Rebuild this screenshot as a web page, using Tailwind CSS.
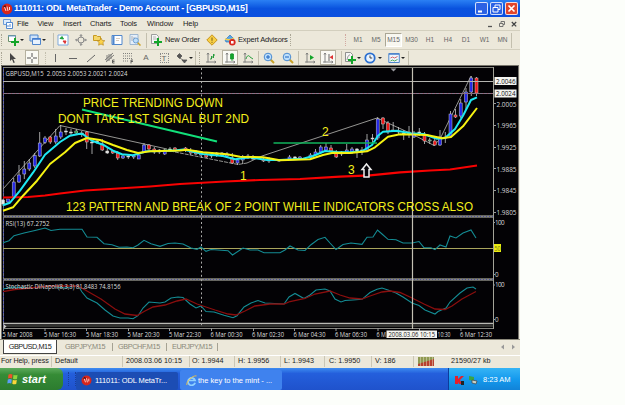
<!doctype html>
<html lang="en">
<head>
	<meta charset="UTF-8">
	<meta name="viewport" content="width=device-width, initial-scale=1.0">
	<title>ODL MetaTrader</title>
	<script src="https://cdn.jsdelivr.net/npm/@tailwindcss/browser@4"></script>
</head>
<body class="h-[405px] overflow-hidden bg-[#fcfefa] font-['Liberation_Sans',sans-serif]">

<!-- icons shared by several bars -->
<svg class="hidden">
	<symbol id="ball" viewBox="0 0 12 12">
		<circle cx="6" cy="6" r="5.4" fill="#d8261c"/>
		<path d="M2 4l2-2 1.500 1.500L4 5z" fill="#5c0c10"/>
		<path d="M3.500 4l1.500 4M6 3.500l1 4.500M8.500 4v3" stroke="#ffe9e4" stroke-width=".9"/>
	</symbol>
	<symbol id="plus" viewBox="0 0 8 8">
		<path d="M3 0h2v3h3v2H5v3H3V5H0V3h3z" fill="#14a52a"/>
	</symbol>
	<symbol id="axes" viewBox="0 0 12 12">
		<path d="M3 1v9.500M1 10h10M2 2.500l1-1.500 1 1.500M9.500 9l1.500 1-1.500 1" fill="none" stroke="#777" stroke-width=".9"/>
	</symbol>
	<symbol id="lens" viewBox="0 0 12 12">
		<path d="M7.500 7.500l3.500 3.500" stroke="#c9a227" stroke-width="2"/>
		<circle cx="5" cy="5" r="3.800" fill="#bfe0fb" stroke="#4a8ad0"/>
	</symbol>
</svg>

<div class="flex h-[390px] w-[520px] flex-col overflow-hidden bg-[#ece8da] text-[#222]">

	<!-- title bar -->
	<div class="flex h-[17px] items-center bg-linear-to-b from-[#2b80f4] via-[#0a52de] to-[#0b4fe0] pr-0.5 pl-px text-white">
		<svg class="h-3 w-3"><use href="#ball"/></svg>
		<span class="mt-px ml-px w-[240px] text-[9px] font-bold tracking-[-0.26px] whitespace-nowrap">111011: ODL MetaTrader - Demo Account - [GBPUSD,M15]</span>
		<div class="ml-auto flex gap-0.5">
			<svg class="size-[13px] rounded-xs border border-white/80 bg-[#2c62e4]" viewBox="0 0 11 11"><path d="M2 8.500h4" stroke="#fff" stroke-width="2"/></svg>
			<svg class="size-[13px] rounded-xs border border-white/80 bg-[#2c62e4]" viewBox="0 0 11 11"><path d="M4 4V2h5v4.500H7M2 4.500h5v4.500H2z" fill="none" stroke="#fff"/></svg>
			<svg class="size-[13px] rounded-xs border border-white/80 bg-[#e0452c]" viewBox="0 0 11 11"><path d="M2.500 2.500l6 6M8.500 2.500l-6 6" stroke="#fff" stroke-width="1.600"/></svg>
		</div>
	</div>

	<!-- menu -->
	<div class="flex h-[13px] items-center pl-[3px] text-[7.5px] tracking-[-0.1px]">
		<svg class="h-[10px] w-[10px]" viewBox="0 0 10 10"><path d="M.5.500h7v5h-7z" fill="#dcebfb" stroke="#6b9bd8"/><path d="M3.500 3.500h6v6h-6z" fill="#fff" stroke="#5288cf"/><path d="M5 8V6M7 8V5" stroke="#5288cf"/></svg>
		<span class="ml-1 w-[20.5px]">File</span>
		<span class="w-[25.5px]">View</span>
		<span class="w-[27px]">Insert</span>
		<span class="w-[30px]">Charts</span>
		<span class="w-[27px]">Tools</span>
		<span class="w-[36px]">Window</span>
		<span>Help</span>
		<div class="mr-[3px] ml-auto flex gap-[6px]">
			<svg class="h-2 w-1.5" viewBox="0 0 6 8"><path d="M1 6.500h4" stroke="#555" stroke-width="1.300"/></svg>
			<svg class="h-2 w-1.5" viewBox="0 0 6 8"><path d="M2 3V1.500h3.500v3H4M.5 3.500h3.500v3H.5z" fill="none" stroke="#666" stroke-width=".9"/></svg>
			<svg class="h-2 w-1.5" viewBox="0 0 6 8"><path d="M.8 2l4.400 4.400M5.200 2L.8 6.400" stroke="#444" stroke-width="1.300"/></svg>
		</div>
	</div>

	<!-- standard toolbar -->
	<div class="flex h-[19px] items-center border-t border-[#d3cfbe] text-[7.5px]">
		<div class="ml-px h-3 w-[3px] border-l border-dotted border-[#aaa695]"></div>
		<div class="flex w-[22px] items-center justify-center gap-px">
			<svg class="h-3 w-3" viewBox="0 0 12 12"><path d="M1.500 1.500h7v6h-7z" fill="#fff" stroke="#6a8f6a"/><path d="M1 2h8" stroke="#6b9bd8"/><use href="#plus" x="4" y="4" width="8" height="8"/></svg>
			<svg class="w-1 h-1" viewBox="0 0 4 4"><path d="M0 1h4L2 3z" fill="#222"/></svg>
		</div>
		<div class="flex w-[23px] items-center justify-center gap-px">
			<svg class="h-3 w-3" viewBox="0 0 12 12"><path d="M1 1h8v6H1z" fill="#cfe3fa" stroke="#4f86cc"/><path d="M3.500 4.500h8v6h-8z" fill="#e8f2fd" stroke="#4f86cc"/><path d="M3.500 5h8" stroke="#3f7ad0" stroke-width="1.500"/></svg>
			<svg class="w-1 h-1" viewBox="0 0 4 4"><path d="M0 1h4L2 3z" fill="#222"/></svg>
		</div>
		<div class="h-[15px] w-[5px] border-r border-[#c3bfae]"></div>
		<div class="flex w-[17px] justify-center"><svg class="h-3 w-3" viewBox="0 0 12 12"><path d="M1 1h10v10H1z" fill="#fff" stroke="#7fa9dc"/><path d="M3 4.500l2-2 1.500 2.500z" fill="#19a23a" stroke="#19a23a"/><path d="M6 7l3 0-1 2.500z" fill="#d33" stroke="#d33"/></svg></div>
		<div class="flex w-[19px] justify-center"><svg class="h-3 w-3" viewBox="0 0 12 12" fill="none" stroke="#888"><circle cx="6" cy="6" r="3"/><path d="M6 .5v3M6 8.500v3M.5 6h3M8.500 6h3M4.700 2L6 .7 7.300 2M4.700 10L6 11.300 7.300 10M2 4.700L.7 6 2 7.300M10 4.700L11.300 6 10 7.300"/></svg></div>
		<div class="flex w-[18px] justify-center"><svg class="h-3 w-3" viewBox="0 0 12 12"><path d="M.5 1.500h3l1 1h3v4h-7z" fill="#f5d76a" stroke="#c79a20"/><path d="M8 4l1.200 2.400 2.600.3-1.900 1.800.5 2.700L8 10l-2.400 1.200.5-2.700-1.900-1.800 2.600-.3z" fill="#fbd34c" stroke="#b9891c" stroke-width=".7"/></svg></div>
		<div class="flex w-[18px] justify-center"><svg class="h-3 w-3" viewBox="0 0 12 12"><path d="M1 1.500h10v9H1z" fill="#fff" stroke="#4f86cc"/><path d="M2.500 2v8" stroke="#4f86cc" stroke-width="2"/><path d="M5 4.500h4M5 6.500h3" stroke="#c9b7a5" stroke-width=".7"/></svg></div>
		<div class="flex w-[18px] justify-center"><svg class="h-3 w-3" viewBox="0 0 12 12"><path d="M1 .5h8v10H1z" fill="#e5effa" stroke="#8ba9ca" stroke-width=".8"/><path d="M3 2v5M5 3v3" stroke="#999" stroke-width=".7"/><path d="M8.500 8.500l3 3" stroke="#c9a227" stroke-width="1.500"/><circle cx="6.800" cy="6.500" r="2.500" fill="#bfe0fb" stroke="#5a8fc8" stroke-width=".8"/></svg></div>
		<div class="h-[15px] w-[3px] border-r border-[#c3bfae]"></div>
		<div class="flex w-[18px] justify-center"><svg class="h-3 w-3" viewBox="0 0 12 12"><path d="M1.500.500h5l2 2v7h-7z" fill="#f6f6f6" stroke="#888" stroke-width=".8"/><path d="M3 3h3M3 5h4" stroke="#999" stroke-width=".7"/><use href="#plus" x="4" y="4" width="8" height="8"/></svg></div>
		<span class="w-[38px] tracking-[-0.17px] whitespace-nowrap">New Order</span>
		<div class="flex w-[18px] justify-center"><svg class="h-3 w-3" viewBox="0 0 12 12"><path d="M6 .8L11.200 6 6 11.200.8 6z" fill="#f7cf45" stroke="#c9941c"/><path d="M6 3.500v3.300M6 7.800v1" stroke="#7a5a10"/></svg></div>
		<div class="flex w-[17px] justify-center"><svg class="h-3 w-3" viewBox="0 0 12 12"><path d="M1 6l5-5 4 4-2 3H2z" fill="#5aa6e6" stroke="#2f77bd" stroke-width=".7"/><path d="M1 5c3 1 6 1 9-1" stroke="#f1cf4d" stroke-width="1.500" fill="none"/><circle cx="8.300" cy="8.300" r="3.300" fill="#d92a20"/><path d="M7 7h2.600v2.600H7z" fill="#fff"/></svg></div>
		<span class="w-[53px] border-r border-dotted border-[#aaa695] tracking-[-0.17px] whitespace-nowrap">Expert Advisors</span>
		<div class="h-3 w-[55px] border-r border-dotted border-[#d2a8a0]"></div>
		<div class="flex h-[15px] items-center border-r border-[#c3bfae] pl-[3px] text-[6.5px] text-[#666]">
			<span class="w-[18px] text-center">M1</span>
			<span class="w-[18px] text-center">M5</span>
			<span class="h-[14px] w-[17px] border border-[#aaa695] border-r-white border-b-white bg-[#f8f7f0] text-center leading-[12px]">M15</span>
			<span class="w-[19px] text-center">M30</span>
			<span class="w-[18px] text-center">H1</span>
			<span class="w-[18px] text-center">H4</span>
			<span class="w-[18px] text-center">D1</span>
			<span class="w-[19px] text-center">W1</span>
			<span class="w-[17px] text-center">MN</span>
		</div>
	</div>

	<!-- drawing and chart toolbar -->
	<div class="flex h-4 items-center border-t border-[#d3cfbe] text-[8px] text-[#666]">
		<div class="ml-px h-3 w-[3px] border-l border-dotted border-[#aaa695]"></div>
		<div class="flex w-[21px] justify-center"><svg class="mr-1.5 h-3 w-3" viewBox="0 0 12 12"><path d="M4 1v8l2-1.800L7.500 11l1.300-.6L7.300 7H10z" fill="#444"/></svg></div>
		<div class="flex h-[15px] w-[14px] items-center justify-center border border-[#b5b19f] bg-[#fafaf4]"><svg class="h-3 w-3" viewBox="0 0 12 12"><path d="M6 1v4M6 7v4M1 6h4M7 6h4" stroke="#555"/></svg></div>
		<div class="h-3 w-[7px] border-r border-dotted border-[#c3bfae]"></div>
		<div class="flex w-[18px] justify-center"><svg class="h-3 w-3" viewBox="0 0 12 12"><path d="M6.500 2v8" stroke="#666"/></svg></div>
		<div class="flex w-[18px] justify-center"><svg class="h-3 w-3" viewBox="0 0 12 12"><path d="M2 6.500h8" stroke="#666"/></svg></div>
		<div class="flex w-[18px] justify-center"><svg class="h-3 w-3" viewBox="0 0 12 12"><path d="M2 10l8-7" stroke="#666"/></svg></div>
		<div class="flex w-[19px] justify-center"><svg class="h-3 w-3" viewBox="0 0 12 12"><path d="M1 8l8-7M2 10l8-7M3 3v6M5 2v7M7 2v5" stroke="#666" stroke-width=".8"/><path d="M10.500 8H8.500v3h2M8.500 9.500h2" stroke="#444" stroke-width=".8" fill="none"/></svg></div>
		<div class="flex w-[18px] justify-center"><svg class="h-3 w-3" viewBox="0 0 12 12"><path d="M1 1.500h10M1 4h10M1 6.500h10M1 9h6" stroke="#666" stroke-width=".8" stroke-dasharray="1 1"/><path d="M11 8H9v3.500M9 9.500h2" stroke="#444" stroke-width=".8" fill="none"/></svg></div>
		<span class="w-[18px] text-center">A</span>
		<div class="flex w-[18px] justify-center"><span class="h-[10px] w-[9px] border border-dotted border-[#888] text-center text-[8px] leading-[9px]">T</span></div>
		<div class="flex w-[22px] items-center justify-center gap-px">
			<svg class="h-3 w-3" viewBox="0 0 12 12"><path d="M1 4l2.500-2.500L6 4 3.500 6.500zM6 8h5l-2.500 3zM4 6l4 3" fill="#555" stroke="#555" stroke-width=".8"/></svg>
			<svg class="w-1 h-1" viewBox="0 0 4 4"><path d="M0 1h4L2 3z" fill="#222"/></svg>
		</div>
		<div class="h-[14px] w-px border-r border-[#c3bfae]"></div>
		<div class="h-3 w-1 border-r border-dotted border-[#aaa695]"></div>
		<div class="flex w-[22px] justify-center"><svg class="h-3 w-3" viewBox="0 0 12 12"><use href="#axes"/><path d="M5 7h1.500V4M8.500 2v4M8.500 3h1.500M8.500 5H7" stroke="#14942c" stroke-width=".9" fill="none"/></svg></div>
		<div class="flex h-[15px] w-4 items-center justify-center border border-[#b5b19f] bg-[#fafaf4]"><svg class="h-3 w-3" viewBox="0 0 12 12"><use href="#axes"/><path d="M6.500 2h3v5h-3zM8 1v8" fill="#14b02c" stroke="#14942c" stroke-width=".8"/></svg></div>
		<div class="flex w-[20px] justify-center"><svg class="h-3 w-3" viewBox="0 0 12 12"><use href="#axes"/><path d="M4 7c1-4 3-4 4-2l3 2" fill="none" stroke="#14942c" stroke-width=".9"/></svg></div>
		<div class="h-[14px] w-px bg-[#c3bfae]"></div>
		<div class="flex w-[20px] justify-center"><svg class="h-3 w-3" viewBox="0 0 12 12"><use href="#lens"/><path d="M3 5h4M5 3v4" stroke="#1c62c0"/></svg></div>
		<div class="flex w-[17px] justify-center"><svg class="h-3 w-3" viewBox="0 0 12 12"><use href="#lens"/><path d="M3 5h4" stroke="#1c62c0"/></svg></div>
		<div class="ml-0.5 h-[14px] w-px bg-[#c3bfae]"></div>
		<div class="flex w-[21px] justify-center"><svg class="h-3 w-3" viewBox="0 0 12 12"><use href="#axes"/><path d="M6 3l4 2.500L6 8z" fill="#14a52a"/></svg></div>
		<div class="flex h-[15px] w-4 items-center justify-center border border-[#b5b19f] bg-[#fafaf4]"><svg class="h-3 w-3" viewBox="0 0 12 12"><use href="#axes"/><path d="M7 2v7" stroke="#666"/><path d="M11 3L7.500 5.200 11 7.500z" fill="#d33"/></svg></div>
		<div class="ml-[5px] h-[14px] w-px bg-[#c3bfae]"></div>
		<div class="flex w-[20px] items-center justify-center gap-px">
			<svg class="h-3 w-3" viewBox="0 0 12 12"><path d="M1.500.500h5l2 2v7h-7z" fill="#f6f6f6" stroke="#777" stroke-width=".8"/><path d="M3 8c1-5 2-5 3-5" stroke="#777" fill="none" stroke-width=".8"/><use href="#plus" x="4" y="4" width="8" height="8"/></svg>
			<svg class="w-1 h-1" viewBox="0 0 4 4"><path d="M0 1h4L2 3z" fill="#222"/></svg>
		</div>
		<div class="flex w-[22px] items-center justify-center gap-0.5">
			<svg class="h-3 w-3" viewBox="0 0 12 12"><circle cx="6" cy="6" r="4.700" fill="#eaf4ff" stroke="#2a6fd0" stroke-width="1.800"/><path d="M6 3.500V6h2.200" fill="none" stroke="#333" stroke-width=".9"/></svg>
			<svg class="w-1 h-1" viewBox="0 0 4 4"><path d="M0 1h4L2 3z" fill="#222"/></svg>
		</div>
		<div class="flex w-[24px] items-center justify-center gap-px">
			<svg class="h-3 w-3" viewBox="0 0 12 12"><path d="M.8 1.500h10.500v9H.8z" fill="#eef5fd" stroke="#4f86cc"/><path d="M1 2h10" stroke="#4f86cc" stroke-width="1.600"/><path d="M2.500 6l2-1 2 1 3-1.500" stroke="#c44" fill="none" stroke-width=".8"/><path d="M2.500 9l2-1 2 1 3-1.500" stroke="#2a9a3a" fill="none" stroke-width=".8"/></svg>
			<svg class="w-1 h-1" viewBox="0 0 4 4"><path d="M0 1h4L2 3z" fill="#222"/></svg>
		</div>
		<div class="h-[14px] w-px bg-[#c3bfae]"></div>
	</div>

	<!-- chart window, user units are window pixels -->
	<svg class="h-[274px] w-[520px] shrink-0 font-['Open_Sans',sans-serif]" viewBox="0 65 520 274">
		<rect x="0" y="65" width="520" height="274" fill="#ece8da"/>
		<rect x="1" y="65" width="517.500" height="274" fill="#030205"/>
		<path d="M1.500 339V65.500H518" fill="none" stroke="#77746a"/>

		<!-- pane borders -->
		<g fill="none">
			<path d="M3 67.500H493" stroke="#83837c"/>
			<path d="M3.500 68V328" stroke="#6f7090"/>
			<path d="M3.500 68V328" stroke="#3b45b8" stroke-dasharray="1 3"/>
			<path d="M3 216.500H493M3 279.500H493" stroke="#87877f" stroke-width="2.600"/>
			<path d="M3 216.500H493M3 279.500H493" stroke="#4b50a0" stroke-dasharray="1 2"/>
			<path d="M3 323.500H493" stroke="#b9b9b4" stroke-width="1.400"/>
			<path d="M3 326H493" stroke="#45453f" stroke-width="1.500"/>
			<path d="M3 328.500H493" stroke="#85857f"/>
			<path d="M493.500 67V329" stroke="#a3a398"/>
			<path d="M201.500 68V327" stroke="#aaaaa8" stroke-dasharray="2 2.400"/>
		</g>
		<path d="M390.500 68.500h6l-3 3z" fill="#9a9aa0"/>
		<path d="M3.500 324v5l3-2.500z" fill="#ccc"/>
		<path d="M3.500 328v3M45 328v3M86.500 328v3M128.500 328v3M169.500 328v3M211.500 328v3M253.500 328v3M294.500 328v3M336 328v3M378 328v3M419.500 328v3M461 328v3" stroke="#999"/>
		<path d="M493 103.500h3M493 125.500h3M493 147.500h3M493 168.500h3M493 190.500h3M493 212.500h3M493 222.500h2M493 274.500h2M493 285h2M493 319.500h2" stroke="#999"/>

		<!-- zigzag -->
		<path d="M3 189L60 125.500 167 149" fill="none" stroke="#a5a5a2" stroke-width=".9"/>
		<path d="M170 151L238 164.500 247 163" fill="none" stroke="#a5a5a2" stroke-width=".9" stroke-dasharray="4 1"/>
		<path d="M247 163L262 156 377 118 412 134 434 145.500 440 139 471 76" fill="none" stroke="#a5a5a2" stroke-width=".9"/>

		<g id="candles" stroke="#c9c9c9" stroke-width=".8"></g>

		<!-- moving averages -->
		<g fill="none" stroke-width="2" stroke-linejoin="round">
			<polyline stroke="#f80202" stroke-width="2.200" points="3,197.500 28,197 45,195.500 60,193.500 85,190.500 110,189 150,186.500 180,184 225,181.500 260,180 300,179 340,176.700 370,175.300 400,172.300 430,170.500 450,169.500 477,165.500"/>
			<polyline stroke="#1ee8f2" points="3,205.300 10,202.700 20,190.700 33,172.700 45,154.700 60,142 70,135.700 80,133.700 83,134.300 92,140.700 103,144.700 113,150.700 122,154.300 133,155.300 147,151.300 163,151 177,150.300 183,149.500 203,154 223,156 235,159.300 250,157.300 267,160 280,160 303,158.700 313,156 325,151 337,152 350,152.300 362,151.300 372,145 378,135.700 383,131.700 397,130.700 410,133.300 423,134 437,138.700 445,138 455,129 463,115.700 471,100 477,97.300"/>
			<polyline stroke="#f6f312" points="3,210.700 13,207.300 23,195.700 37,180.700 50,164 65,152.300 75,143 87,138 100,140 113,145 127,150 138,153 150,151.300 180,150.500 187,149.700 203,152.300 227,154.300 240,156.700 263,157.300 280,160.300 310,159.300 323,155 333,152.700 350,153 367,151.300 375,147.300 388,136.700 400,134.300 427,135 442,138.300 451,137 463,126.300 477,108"/>
		</g>
		<path d="M82 109.500L217 141.500" stroke="#12e07a" stroke-width="2"/>
		<path d="M273.500 143H377" stroke="#12b45c" stroke-width="1.600"/>

		<!-- price lines and cursor -->
		<path d="M3 81.500H493" stroke="#b4b4b0"/>
		<path d="M3 93.500H493" stroke="#82788a"/>
		<path d="M3 93.500H493" stroke="#a05a70" stroke-dasharray="1 3"/>

		<!-- RSI and stochastic -->
		<path d="M3 248.500H493" stroke="#a9a45c"/>
		<g fill="none" stroke-width="1.100">
			<polyline stroke="#148c94" points="3,242.700 9,240.700 14,235.700 24,233 35,230.500 45,228 51,230.500 60,229.300 82,229.300 87,237 97,237.300 104,243.700 112,244.700 119,247.300 127,247 133,247.700 138,245 144,240.300 151,243.700 160,246.300 168,243.500 175,243 183,244 191,248 197,249.300 201,247 206,251.300 211,249.500 228,250.700 232.500,255 243,248 250,250 258,250 264,252.700 280,252.700 285,250 290,246 298,250 305,250.500 311,244.700 318,239.500 325,237.300 330,243 336,249.500 343,244.500 351,243 362,244.300 367,237.300 373,237 377.500,230 382,234 388,239.300 396,239.700 403,243 412,243 419,241.500 424,247.700 431,247.700 435,249.700 440,245 446,247 450,236 456,238 463,233 471,230 476,238"/>
			<polyline stroke="#148c94" points="3,289 12,287 30,288 50,286 65,288 78,285.500 82,292 87,298 97,303 105,310 113,316 120,318 128,318 133,318.700 138,315.700 143,308 149,302 160,303 165,302 171,298 178,297 183,297.500 190,304 196,308 201,306 206,311.500 214,312 224,315.300 233,317.700 237,315.700 244,307 251,303 258,300.500 265,303 284,304 289,297 295,293.500 304,298.500 310,295 316,290 325,289 330,291 335,299 341,302 345,300.500 353,300 362,299.300 370,292.500 377,289.300 382,288 388,290 396,293 403,297 412,303 419,305.500 425,310 435,314 438,311.500 446,308 450,302 460,293 467,288 473,287 476,289"/>
			<polyline stroke="#8a0e0e" stroke-width="1.300" points="3,291.700 15,289.500 30,288 50,286 78,286 87,291 101,299 115,309 125,314 137,315.500 145,311 153,307 165,305 177,301 186,299 197,304 215,310 228,314 236,315 245,311 255,306 270,304 284,304 290,301.500 305,298.500 315,294 330,291 340,295 350,298 362,299 370,296 382,292 390,291 400,292.500 412,298 424,304 435,309 445,309.500 452,306 462,299 476,291.500"/>
		</g>
		<path d="M412.500 68V329" stroke="#c4c1b4" stroke-width="1.200"/>

		<!-- notes drawn on the chart -->
		<g fill="#f4f01c" font-size="12" font-family="Liberation Sans, sans-serif">
			<text x="83" y="106.500" textLength="140" lengthAdjust="spacingAndGlyphs">PRICE TRENDING DOWN</text>
			<text x="58" y="122.500" textLength="191" lengthAdjust="spacingAndGlyphs">DONT TAKE 1ST SIGNAL BUT 2ND</text>
			<text x="66" y="211" textLength="407" lengthAdjust="spacingAndGlyphs">123 PATTERN AND BREAK OF 2 POINT WHILE INDICATORS CROSS ALSO</text>
			<text x="240" y="180">1</text>
			<text x="322" y="136">2</text>
			<text x="348" y="174">3</text>
		</g>
		<path d="M366.500 164l4.500 5.500h-2v7.500h-5v-7.500h-2z" fill="#050308" stroke="#eee" stroke-width="1.500"/>

		<!-- captions and axis labels -->
		<g fill="#dedede" font-size="6.500">
			<text x="5.500" y="75.500" textLength="122" lengthAdjust="spacingAndGlyphs" xml:space="preserve">GBPUSD,M15  2.0053 2.0053 2.0021 2.0024</text>
			<text x="5.500" y="226" textLength="44" lengthAdjust="spacingAndGlyphs">RSI(13) 67.2752</text>
			<text x="5.500" y="289" textLength="115" lengthAdjust="spacingAndGlyphs">Stochastic DiNapoli(8,3,3) 81.8483 74.8156</text>
		</g>
		<g fill="#d8d8d8" font-size="6.300">
			<text x="496.500" y="106.500" textLength="20" lengthAdjust="spacingAndGlyphs">2.0005</text>
			<text x="496.500" y="128" textLength="20" lengthAdjust="spacingAndGlyphs">1.9965</text>
			<text x="496.500" y="149.500" textLength="20" lengthAdjust="spacingAndGlyphs">1.9925</text>
			<text x="496.500" y="171.500" textLength="20" lengthAdjust="spacingAndGlyphs">1.9885</text>
			<text x="496.500" y="193" textLength="20" lengthAdjust="spacingAndGlyphs">1.9845</text>
			<text x="496.500" y="214.500" textLength="20" lengthAdjust="spacingAndGlyphs">1.9805</text>
			<text x="495" y="224.500" textLength="9.500">100</text>
			<text x="495" y="276.500">0</text>
			<text x="495" y="287" textLength="9.500">100</text>
			<text x="495" y="321.500">0</text>
		</g>
		<rect x="494.500" y="77" width="22" height="8" fill="#f4f4f0"/>
		<rect x="494.500" y="89.500" width="22" height="8" fill="#f4f4f0"/>
		<rect x="494" y="244" width="7" height="8" fill="#ecec10"/>
		<g fill="#111" font-size="6.300">
			<text x="496" y="83.500" textLength="19.500" lengthAdjust="spacingAndGlyphs">2.0046</text>
			<text x="496" y="96" textLength="19.500" lengthAdjust="spacingAndGlyphs">2.0024</text>
			<text x="494.500" y="250.500" textLength="6" lengthAdjust="spacingAndGlyphs" fill="#77771c">50</text>
		</g>
		<g fill="#dedede" font-size="6.300">
			<text x="2.500" y="336.500" textLength="30" lengthAdjust="spacingAndGlyphs">5 Mar 2008</text>
			<text x="44" y="336.500" textLength="32" lengthAdjust="spacingAndGlyphs">5 Mar 16:30</text>
			<text x="86" y="336.500" textLength="32" lengthAdjust="spacingAndGlyphs">5 Mar 18:30</text>
			<text x="127.500" y="336.500" textLength="32" lengthAdjust="spacingAndGlyphs">5 Mar 20:30</text>
			<text x="169" y="336.500" textLength="32" lengthAdjust="spacingAndGlyphs">5 Mar 22:30</text>
			<text x="210.500" y="336.500" textLength="32" lengthAdjust="spacingAndGlyphs">6 Mar 00:30</text>
			<text x="252" y="336.500" textLength="32" lengthAdjust="spacingAndGlyphs">6 Mar 02:30</text>
			<text x="293.500" y="336.500" textLength="32" lengthAdjust="spacingAndGlyphs">6 Mar 04:30</text>
			<text x="335" y="336.500" textLength="32" lengthAdjust="spacingAndGlyphs">6 Mar 06:30</text>
			<text x="376.500" y="336.500" textLength="9.500" lengthAdjust="spacingAndGlyphs">6 M</text>
			<text x="437.500" y="336.500" textLength="13" lengthAdjust="spacingAndGlyphs">10:30</text>
			<text x="460" y="336.500" textLength="32" lengthAdjust="spacingAndGlyphs">6 Mar 12:30</text>
		</g>
		<rect x="386.500" y="330.500" width="50.500" height="7.500" fill="#f4f4f0"/>
		<text x="388.500" y="336.500" textLength="46.500" lengthAdjust="spacingAndGlyphs" fill="#222" font-size="6.300">2008.03.06 10:15</text>
	</svg>

	<!-- chart tabs -->
	<div class="flex h-[15.5px] items-start border-t border-[#8c897b] pl-[3px] text-[7.3px] text-[#8b887b]">
		<span class="h-[13.5px] w-[54px] border border-t-0 border-[#444] bg-white text-center leading-[13px] tracking-[-0.45px] text-[#222]">GBPUSD,M15</span>
		<span class="mt-[3px] ml-[8px] w-[48px] border-r border-[#a5a293] leading-[8px] tracking-[-0.4px]">GBPJPY,M15</span>
		<span class="mt-[3px] w-[54px] border-r border-[#a5a293] pl-[5px] leading-[8px] tracking-[-0.4px]">GBPCHF,M15</span>
		<span class="mt-[3px] w-[51px] border-r border-[#a5a293] pl-[5px] leading-[8px] tracking-[-0.4px]">EURJPY,M15</span>
		<svg class="mt-1 mr-[4px] ml-auto h-1.5 w-4" viewBox="0 0 16 6"><path d="M4 .5v5L1 3zM12 .5v5l3-2.500z" fill="#999"/></svg>
	</div>

	<!-- status bar -->
	<div class="flex h-[13px] items-center border-t border-white text-[7.2px] whitespace-nowrap">
		<span class="w-[52px] border-r border-[#cbc7b6] pl-px tracking-[-0.1px]">For Help, press</span>
		<span class="w-[71px] border-r border-[#cbc7b6] pl-[3px]">Default</span>
		<span class="w-[67px] border-r border-[#cbc7b6] pl-[3px]">2008.03.06 10:15</span>
		<span class="w-[45px] border-r border-[#cbc7b6] pl-[2px]">O: 1.9944</span>
		<span class="w-[46px] border-r border-[#cbc7b6] pl-[3px]">H: 1.9956</span>
		<span class="w-[44px] border-r border-[#cbc7b6] pl-[3px]">L: 1.9943</span>
		<span class="w-[47px] border-r border-[#cbc7b6] pl-[4px]">C: 1.9950</span>
		<span class="w-[42px] border-r border-[#cbc7b6] pl-[3px]">V: 186</span>
		<svg class="ml-[4px] h-[9px] w-4" viewBox="0 0 16 9">
			<path d="M0 0h16v9H0z" fill="#8f9a52"/>
			<path d="M0 9V7l16-5v7z" fill="#b8402e"/>
			<path d="M2.500 0v9M5.500 0v9M8.500 0v9M11.500 0v9M14.500 0v9" stroke="#e4dfc6" stroke-width=".5"/>
		</svg>
		<span class="ml-[17px]">21590/27 kb</span>
	</div>

	<!-- taskbar -->
	<div class="flex min-h-0 flex-1 items-stretch bg-linear-to-b from-[#3f8cf0] via-[#245fdc] via-25% to-[#1f52cc] text-[8px] text-white">
		<div class="flex w-[63px] items-center rounded-r-md bg-linear-to-b from-[#5cab5c] via-[#368c36] via-30% to-[#2c7c2f] pl-[7px]">
			<svg class="h-3 w-3" viewBox="0 0 12 12">
				<path d="M1.500 1.500q2-1 4 0L5 5.500q-2-1-4 0z" fill="#f0502c"/>
				<path d="M6.500 1.800q2 1 4 0L10 5.800q-2 1-4 0z" fill="#8fd63c"/>
				<path d="M.8 6.500q2-1 4 0l-.5 4q-2-1-4 0z" fill="#5c9cf5"/>
				<path d="M5.800 6.800q2 1 4 0l-.5 4q-2 1-4 0z" fill="#fbd53a"/>
			</svg>
			<span class="ml-[3px] text-[11px] font-bold italic">start</span>
		</div>
		<div class="ml-[5px] flex w-[8px] justify-between py-1"><i class="border-l border-dotted border-[#1a3f9a]"></i><i class="border-l border-dotted border-[#1a3f9a]"></i></div>
		<div class="mt-[4px] flex w-[102px] items-center rounded-xs bg-[#1c4db4] pl-[5px]">
			<svg class="h-[11px] w-[11px]"><use href="#ball"/></svg>
			<span class="ml-[3px] text-[7.5px] tracking-[-0.1px] whitespace-nowrap">111011: ODL MetaTr...</span>
		</div>
		<div class="mt-[2px] ml-[2px] flex w-[102px] items-center rounded-xs bg-[#3f82ee] pt-0.5 pl-[6px]">
			<svg class="h-[11px] w-[11px]" viewBox="0 0 12 12"><path d="M10 8.500A4 4 0 1 1 10 6H3" fill="none" stroke="#8fd0ff" stroke-width="1.900"/><path d="M1 11C-.5 8 7 0 11.500 1" fill="none" stroke="#f3c33c"/></svg>
			<span class="ml-px text-[7.5px] whitespace-nowrap">the key to the mint - ...</span>
		</div>
		<div class="ml-auto flex w-[72px] items-center border-l border-[#0c3c9c] bg-linear-to-b from-[#35b4f5] via-[#149aee] to-[#1183d8] pt-0.5 pl-[6px]">
			<svg class="h-[10px] w-[10px]" viewBox="0 0 10 10"><path d="M0 1h3v3l3-3h3L5 5l2 4H4L3 7v2H0z" fill="#e4202a"/><path d="M6 6h3v4H6z" fill="#222"/></svg>
			<svg class="ml-[3px] h-[10px] w-[10px]" viewBox="0 0 10 10"><path d="M1 1l5 1v4L1 5z" fill="#3ba443"/><path d="M4 5l5 1-1 3-4-1z" fill="#c8d2c8" stroke="#444" stroke-width=".7"/></svg>
			<span class="ml-[5px] text-[7.5px] whitespace-nowrap">8:23 AM</span>
		</div>
	</div>
</div>

<script>
	// x, high, low, body top, body bottom, colour
	const candles = [
		[3, 199, 206, 200, 204, 'w'], [8, 199, 204, 199, 202, 'b'], [13.7, 178, 198, 182, 197, 'b'], [19, 165, 183, 175, 182, 'b'],
		[24.3, 161, 179, 169, 174, 'b'], [29.3, 159, 171, 163, 169, 'b'], [34.7, 153, 168, 155.5, 166, 'b'],
		[39.7, 132, 157, 143, 156, 'b'], [45, 136, 144, 138, 142.5, 'b'], [50.3, 136, 144, 137, 142, 'r'],
		[55.7, 129, 144, 136, 142, 'b'], [60.7, 125, 139, 132, 137, 'b'], [66, 128, 135, 131, 132, 'w'],
		[71, 129, 136, 132, 133, 'w'], [76.3, 129, 135, 131, 133, 'g'], [81.7, 131, 137, 133, 134, 'w'],
		[86.7, 131, 149, 132, 142, 'r'], [92, 141, 154, 142, 143, 'w'], [97, 139, 144, 141, 142, 'w'],
		[102.3, 139, 151, 144, 150, 'r'], [107.3, 148, 154, 151, 153, 'w'], [112.7, 150, 154, 151, 153, 'r'],
		[117.7, 151, 160, 153, 158, 'r'], [123, 155, 159, 156, 158, 'b'], [128.3, 155, 159, 156, 157, 'w'],
		[133.7, 155, 159, 156, 157, 'b'], [138.7, 153, 159, 155, 159, 'b'], [144, 143, 153, 145, 152, 'b'],
		[149, 144, 151, 145, 149, 'r'], [154.3, 147, 154, 149, 152, 'r'], [159.3, 149, 154, 150, 152, 'w'],
		[164.7, 149, 155, 150, 154, 'b'], [170, 147, 152, 149, 151, 'w'], [175, 147, 152, 148, 151, 'r'],
		[185.5, 147, 152, 148, 150, 'r'], [190.7, 148, 155, 151, 153, 'r'], [196, 150, 155, 151, 154, 'r'],
		[201, 151, 156, 153, 155, 'b'], [206.3, 152, 158, 154, 157, 'r'], [211.5, 153, 158, 154, 156, 'w'],
		[216.7, 152, 157, 153, 155, 'w'], [222, 152, 157, 153, 155, 'b'], [227, 152, 157, 154, 156, 'b'],
		[232.3, 153, 164, 158, 163, 'r'], [237.5, 158, 165, 160, 163, 'b'], [242.7, 155, 164, 157, 160, 'b'],
		[248, 154, 159, 156, 158, 'r'], [253, 155, 160, 157, 159, 'w'], [263.5, 157, 162, 159, 161, 'r'],
		[269, 157, 163, 159, 161, 'b'], [279, 159, 162, 160, 161, 'b'], [289.5, 155, 160, 157, 159, 'b'],
		[295, 156, 160, 157, 159, 'w'], [300, 156, 160, 157, 159, 'b'], [310.5, 153, 159, 155, 158, 'b'],
		[315.5, 149, 156, 152, 155, 'b'], [320.7, 145, 154, 147, 152, 'b'], [326, 143, 151, 147, 150, 'b'],
		[331, 145, 152, 148, 151, 'r'], [336.3, 150, 158, 152, 157, 'r'], [341.5, 151, 156, 152, 154, 'w'],
		[346.7, 144, 154, 150, 152, 'b'], [352, 147, 154, 149, 152, 'b'], [357, 148, 158, 149, 152, 'w'],
		[362, 147, 155, 150, 152, 'w'], [367, 134, 152, 140, 150, 'b'], [372.5, 134, 143, 138, 139, 'w'],
		[377.7, 117, 140, 119, 138, 'b'], [383, 117, 129, 118, 124, 'r'], [388, 121, 134, 123, 132, 'r'],
		[393.2, 122, 132, 130, 131, 'w'], [398.5, 127, 134, 131, 132, 'w'], [403.7, 130, 140, 133, 134, 'w'],
		[409, 126, 138, 132, 134, 'g'], [414, 131, 138, 134, 137, 'b'], [419.3, 128, 136, 132, 134, 'w'],
		[424.5, 132, 144, 134, 141, 'r'], [429.7, 138, 144, 140, 141, 'g'], [434.7, 136, 146, 141, 145, 'r'],
		[440, 130, 146, 137, 145, 'b'], [445.3, 132, 143, 137, 138, 'r'], [450.5, 111, 138, 114, 136, 'b'],
		[455.5, 109, 118, 115, 117, 'r'], [460.7, 99, 118, 103, 116, 'b'], [466, 88, 109, 92, 102, 'b'],
		[471.3, 76, 96, 78, 92, 'b'], [476.5, 77, 96, 78, 93, 'r'],
	];
	const fills = {b: '#2326e6', r: '#f01818', g: '#0a8a20', w: '#e8e8e8'};
	document.getElementById('candles').innerHTML = candles.map(([x, h, l, t, b, c]) =>
		`<path d="M${x} ${h}V${l}"/><rect x="${x - 1.5}" y="${t}" width="3" height="${b - t}" fill="${fills[c]}" stroke-width=".5"/>`
	).join('');
</script>
</body>
</html>
